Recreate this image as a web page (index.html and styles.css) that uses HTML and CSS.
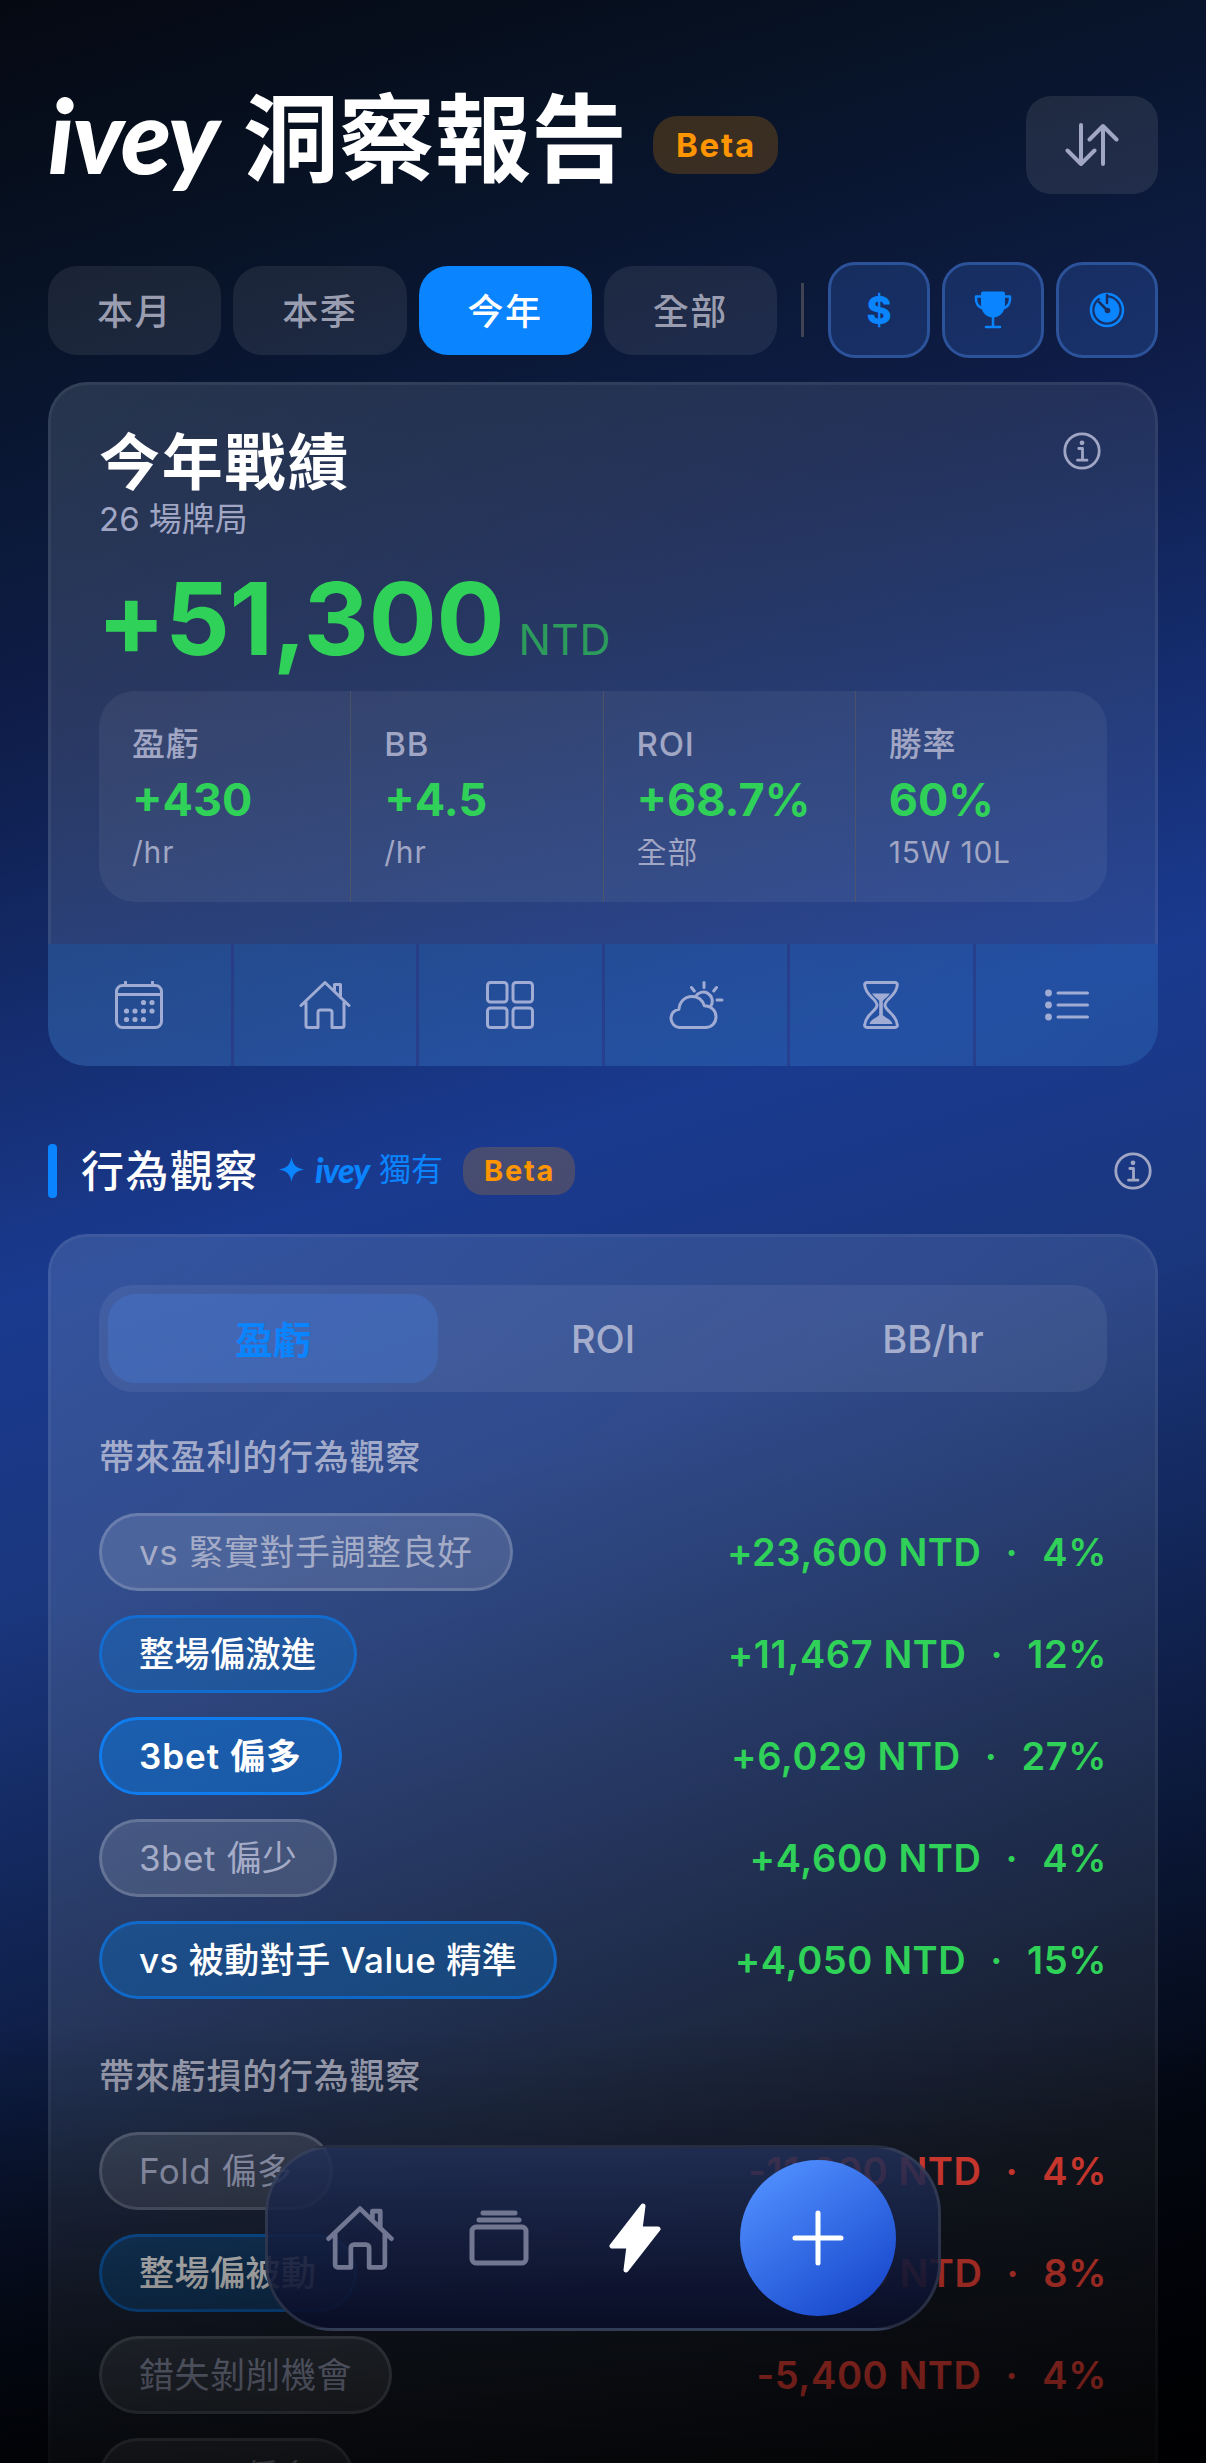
FILE: index.html
```html
<!DOCTYPE html>
<html lang="zh-Hant">
<head>
    <meta charset="UTF-8">
    <meta name="viewport" content="width=device-width, initial-scale=1.0">
    <title>ivey 洞察報告</title>
    <link rel="stylesheet" href="styles.css">
</head>
<body>
    <div class="screen">
        <header class="header">
            <h1 class="page-title"><span class="logo">ivey</span>洞察報告</h1>
            <span class="beta">Beta</span>
            <button class="sort-button">
                <svg width="54" height="44" viewBox="0 0 54 44"><path d="M16 2v39M2.500 27.500 16 41l13.500-13.500M38 41V3M24.500 16.500 38 3l13.500 13.500"/></svg>
            </button>
        </header>

        <div class="filters">
            <button class="tab">本月</button>
            <button class="tab">本季</button>
            <button class="tab active">今年</button>
            <button class="tab">全部</button>
            <span class="divider"></span>
            <button class="type-button dollar">$</button>
            <button class="type-button">
                <svg width="38" height="38" viewBox="0 0 38 38">
                    <path class="fill" d="M9 0.500h20a2 2 0 0 1 2 2V13c0 8-5 13.500-12 13.500S7 21 7 13V2.500a2 2 0 0 1 2-2z"/>
                    <path d="M7 5.500H2c-.5 6 1.500 10.500 7 12M31 5.500h5c.5 6-1.500 10.500-7 12M19 25v10M12 36h14"/>
                </svg>
            </button>
            <button class="type-button">
                <svg width="36" height="36" viewBox="0 0 36 36">
                    <circle cx="18" cy="18" r="16"/>
                    <circle class="fill" cx="18" cy="18" r="12.500"/>
                    <path class="fill" d="M8 5 17 2v8z"/>
                    <path class="needle" d="M18 3v8M10 10l8 8"/>
                    <circle class="hub" cx="18.500" cy="18.500" r="2.800"/>
                </svg>
            </button>
        </div>

        <section class="card summary">
            <div class="summary-body">
                <div class="summary-head">
                    <h2>今年戰績</h2>
                    <svg class="info" width="38" height="38" viewBox="0 0 38 38"><circle cx="19" cy="19" r="17.200"/><circle class="dot" cx="19" cy="10.800" r="2.400"/><path d="M15.800 16.500h3.700v11.500M14.500 28.200h9.500"/></svg>
                </div>
                <p class="games">26 場牌局</p>
                <p class="total">+51,300<span>NTD</span></p>
                <div class="stats">
                    <div class="stat">
                        <span class="stat-label">盈虧</span>
                        <span class="stat-value">+430</span>
                        <span class="stat-note">/hr</span>
                    </div>
                    <div class="stat">
                        <span class="stat-label">BB</span>
                        <span class="stat-value">+4.5</span>
                        <span class="stat-note">/hr</span>
                    </div>
                    <div class="stat">
                        <span class="stat-label">ROI</span>
                        <span class="stat-value">+68.7%</span>
                        <span class="stat-note">全部</span>
                    </div>
                    <div class="stat">
                        <span class="stat-label">勝率</span>
                        <span class="stat-value">60%</span>
                        <span class="stat-note">15W 10L</span>
                    </div>
                </div>
            </div>
            <div class="shortcuts">
                <button>
                    <svg width="48" height="48" viewBox="0 0 48 48">
                        <rect x="1.500" y="4.500" width="45" height="42" rx="6"/>
                        <path d="M2 13.500h44M10.500 1v3M37.500 1v3"/>
                        <g class="dots"><circle cx="28.500" cy="21.500" r="2.600"/><circle cx="37" cy="21.500" r="2.600"/><circle cx="11.500" cy="30" r="2.600"/><circle cx="20" cy="30" r="2.600"/><circle cx="28.500" cy="30" r="2.600"/><circle cx="37" cy="30" r="2.600"/><circle cx="11.500" cy="38.500" r="2.600"/><circle cx="20" cy="38.500" r="2.600"/><circle cx="28.500" cy="38.500" r="2.600"/></g>
                    </svg>
                </button>
                <button>
                    <svg width="52" height="48" viewBox="0 0 52 48"><path d="M2 24.500 26 1.500l24 23M7 21v23.500a2 2 0 0 0 2 2h10V31.500a2.500 2.500 0 0 1 2.500-2.500h9a2.500 2.500 0 0 1 2.500 2.500v15h10a2 2 0 0 0 2-2V21M35.500 9V3.500h6v13"/></svg>
                </button>
                <button>
                    <svg width="48" height="48" viewBox="0 0 48 48"><rect x="1.500" y="1.500" width="19.500" height="19.500" rx="3"/><rect x="27" y="1.500" width="19.500" height="19.500" rx="3"/><rect x="1.500" y="27" width="19.500" height="19.500" rx="3"/><rect x="27" y="27" width="19.500" height="19.500" rx="3"/></svg>
                </button>
                <button>
                    <svg width="56" height="48" viewBox="0 0 56 48"><path d="M11.500 46.500a9.200 9.200 0 0 1-.5-18.300C11.500 20.500 17 15.500 24 15.500c6 0 10.500 3.800 12.300 9.200 7 .3 11.700 4.800 11.700 11 0 6.300-4.500 10.800-10.500 10.800zM27.500 15.500a9 9 0 1 1 15.500 9.200M36 1.500v5M23.500 6.500l2.800 3.500M48.500 6.500 45.700 10M49 19h5"/></svg>
                </button>
                <button>
                    <svg width="36" height="48" viewBox="0 0 36 48">
                        <path d="M4 1.500h28c1.500 0 2.500 1 2.300 2.500-.8 11-12.300 14-12.300 20s11.500 9 12.300 20c.2 1.500-.8 2.500-2.300 2.500H4c-1.500 0-2.500-1-2.300-2.500C2.500 33 14 30 14 24S2.500 15 1.700 4C1.500 2.500 2.500 1.500 4 1.500z"/>
                        <path class="sand" d="M9 12.500h18c-2 3.500-5.500 5-7.200 7.500v14c2 3 8.200 3.500 9.700 9h-23c1.500-5.500 7.700-6 9.700-9V20C14.500 17.500 11 16 9 12.500z"/>
                    </svg>
                </button>
                <button>
                    <svg width="46" height="48" viewBox="0 0 46 48"><path d="M14 12h29.500M14 24h29.500M14 36h29.500"/><g class="dots"><circle cx="4.500" cy="12" r="3.400"/><circle cx="4.500" cy="24" r="3.400"/><circle cx="4.500" cy="36" r="3.400"/></g></svg>
                </button>
            </div>
        </section>

        <div class="section-head">
            <span class="marker"></span>
            <h3>行為觀察</h3>
            <div class="exclusive">
                <svg width="25" height="25" viewBox="0 0 25 25"><path d="M12.500 0c1.300 7.500 4 11 12.500 12.500C16.500 14 13.800 17.500 12.500 25 11.200 17.500 8.500 14 0 12.500 8.500 11 11.200 7.500 12.500 0z"/></svg>
                <span class="logo">ivey</span>
                <span>獨有</span>
            </div>
            <span class="beta small">Beta</span>
            <svg class="info" width="38" height="38" viewBox="0 0 38 38"><circle cx="19" cy="19" r="17.200"/><circle class="dot" cx="19" cy="10.800" r="2.400"/><path d="M15.800 16.500h3.700v11.500M14.500 28.200h9.500"/></svg>
        </div>

        <section class="card behavior">
            <div class="segment">
                <button class="active">盈虧</button>
                <button>ROI</button>
                <button>BB/hr</button>
            </div>

            <h4>帶來盈利的行為觀察</h4>
            <ul class="rows">
                <li><span class="tag">vs 緊實對手調整良好</span><span class="amount">+23,600 NTD<i>·</i>4%</span></li>
                <li><span class="tag blue">整場偏激進</span><span class="amount">+11,467 NTD<i>·</i>12%</span></li>
                <li><span class="tag blue strong">3bet 偏多</span><span class="amount">+6,029 NTD<i>·</i>27%</span></li>
                <li><span class="tag">3bet 偏少</span><span class="amount">+4,600 NTD<i>·</i>4%</span></li>
                <li><span class="tag blue">vs 被動對手 Value 精準</span><span class="amount">+4,050 NTD<i>·</i>15%</span></li>
            </ul>

            <h4 class="loss-title">帶來虧損的行為觀察</h4>
            <ul class="rows loss">
                <li><span class="tag">Fold 偏多</span><span class="amount">-11,200 NTD<i>·</i>4%</span></li>
                <li><span class="tag blue">整場偏被動</span><span class="amount">-8,200 NTD<i>·</i>8%</span></li>
                <li><span class="tag">錯失剝削機會</span><span class="amount">-5,400 NTD<i>·</i>4%</span></li>
                <li><span class="tag">Value 偏多</span></li>
            </ul>
        </section>

        <div class="bottom-fade"></div>

        <nav class="nav">
            <button>
                <svg width="68" height="64" viewBox="0 0 52 48"><path d="M2 24.500 26 1.500l24 23M7 21v23.500a2 2 0 0 0 2 2h10V31.500a2.500 2.500 0 0 1 2.500-2.500h9a2.500 2.500 0 0 1 2.500 2.500v15h10a2 2 0 0 0 2-2V21M35.500 9V3.500h6v13"/></svg>
            </button>
            <button class="sessions">
                <svg width="60" height="56" viewBox="0 0 60 56"><rect x="3" y="17" width="54" height="36" rx="4"/><path d="M14 3h32M10 10h40"/></svg>
            </button>
            <button class="insights">
                <svg class="bolt" width="52" height="70" viewBox="0 0 52 70"><path d="M34 3 3 43h17l-3 24 32-41H31z"/></svg>
            </button>
            <button class="add">
                <svg width="56" height="56" viewBox="0 0 56 56"><path d="M28 3v50M5 28h46"/></svg>
            </button>
        </nav>
    </div>
</body>
</html>
```
FILE: styles.css
```css
:root {
    --blue: #0a84ff;
    --green: #30d158;
    --red: #ff453a;
    --orange: #ff9500;
    --muted: #a0a6c4;
    --font: Inter, "Noto Sans CJK TC", sans-serif;
}

* {
    box-sizing: border-box;
}

body {
    margin: 0;
    font-family: var(--font);
    color: #fff;
    background: #000;
}

h1, h2, h3, h4, p, ul {
    margin: 0;
    padding: 0;
}

button {
    font-family: inherit;
    color: inherit;
    background: none;
    border: none;
    padding: 0;
    display: flex;
    align-items: center;
    justify-content: center;
}

svg {
    display: block;
    flex: none;
    fill: none;
    stroke: currentColor;
    stroke-width: 3;
    stroke-linecap: round;
    stroke-linejoin: round;
}

.screen {
    position: relative;
    height: 2463px;
    overflow: hidden;
    padding: 96px 48px 0;
    background: linear-gradient(163deg, #050912 0%, #071224 10%, #0f1e4a 26%, #1a3a8f 46%, #1a367d 57%, #10224f 70%, #030814 87%, #000105 100%);
}

/* Header */
.header {
    display: flex;
    align-items: center;
    height: 98px;
}

.page-title {
    display: flex;
    align-items: baseline;
    font-size: 96px;
    line-height: 98px;
    font-weight: 700;
    margin-top: -17px;
}

.logo {
    font-family: Lato, "Noto Sans", sans-serif;
    font-style: italic;
    font-weight: 900;
}

.page-title .logo {
    width: 195px;
    font-size: 103px;
    letter-spacing: -1.500px;
}

.beta {
    margin-left: 26px;
    width: 125px;
    height: 58px;
    line-height: 58px;
    border-radius: 24px;
    text-align: center;
    font-size: 33px;
    font-weight: 700;
    letter-spacing: 1.800px;
    text-indent: 1px;
    color: var(--orange);
    background: rgba(255, 149, 0, 0.2);
}

.beta.small {
    margin-left: 20px;
    width: 112px;
    height: 48px;
    line-height: 48px;
    border-radius: 20px;
    font-size: 29px;
}

.sort-button {
    margin-left: auto;
    width: 132px;
    height: 98px;
    border-radius: 25px;
    color: var(--muted);
    background: rgba(255, 255, 255, 0.09);
}

.sort-button svg {
    stroke-width: 4;
}

/* Filters */
.filters {
    display: flex;
    align-items: center;
    gap: 12px;
    height: 96px;
    margin-top: 68px;
}

.tab {
    flex: 1;
    height: 89px;
    padding-bottom: 2px;
    border-radius: 29px;
    font-size: 36px;
    font-weight: 500;
    letter-spacing: 1.500px;
    color: #999daf;
    background: rgba(255, 255, 255, 0.08);
}

.tab.active {
    color: #fff;
    background: var(--blue);
}

.divider {
    width: 3px;
    height: 54px;
    margin: 0 12px;
    background: #404452;
}

.type-button {
    width: 102px;
    height: 96px;
    border: 3px solid #2c529a;
    border-radius: 27px;
    color: var(--blue);
    background: rgba(50, 105, 200, 0.27);
}

.dollar {
    font-size: 38px;
    font-weight: 800;
}

.type-button svg {
    stroke-width: 2.500;
}

.type-button .fill {
    fill: currentColor;
    stroke: none;
}

.type-button .needle {
    stroke: #192c5d;
    stroke-width: 2.500;
}

.type-button .hub {
    fill: #192c5d;
    stroke: none;
}

/* Cards */
.card {
    border-radius: 39px;
    background: linear-gradient(135deg, rgba(215, 238, 255, 0.14), rgba(255, 255, 255, 0.06));
}

.info {
    color: var(--muted);
    stroke-width: 2.800;
}

.info .dot {
    fill: currentColor;
    stroke: none;
}

.summary {
    height: 684px;
    margin-top: 24px;
    overflow: hidden;
}

.summary-body {
    height: 562px;
    padding: 47px 48px 0;
    border: 3px solid rgba(255, 255, 255, 0.06);
    border-bottom: none;
    border-radius: 39px 39px 0 0;
}

.summary-head {
    display: flex;
    justify-content: space-between;
    padding-right: 6px;
}

.summary h2 {
    font-size: 61px;
    line-height: 62px;
    letter-spacing: 1.800px;
}

.games {
    font-size: 33px;
    line-height: 40px;
    margin-top: 5px;
    color: var(--muted);
}

.total {
    display: flex;
    align-items: baseline;
    font-size: 101px;
    line-height: 100px;
    font-weight: 700;
    letter-spacing: -0.300px;
    margin: 29px 0 0 -2px;
    color: var(--green);
}

.total span {
    margin-left: 14px;
    font-size: 43px;
    font-weight: 400;
    letter-spacing: 0.500px;
    opacity: 0.65;
}

.stats {
    display: flex;
    height: 211px;
    margin-top: 2px;
    border-radius: 36px;
    background: rgba(255, 255, 255, 0.06);
}

.stat {
    flex: 1;
    display: flex;
    flex-direction: column;
    padding: 32px 0 0 33px;
    color: var(--muted);
}

.stat + .stat {
    border-left: 1px solid rgba(95, 90, 90, 0.6);
}

.stat-label {
    font-size: 33px;
    line-height: 42px;
    font-weight: 500;
    letter-spacing: 0.800px;
}

.stat-value {
    font-size: 45px;
    line-height: 56px;
    margin-top: 7px;
    font-weight: 700;
    color: var(--green);
}

.stat-note {
    font-size: 30px;
    line-height: 40px;
    margin-top: 4px;
    letter-spacing: 0.800px;
}

.shortcuts {
    display: flex;
    height: 122px;
    background: rgba(22, 108, 205, 0.24);
}

.shortcuts button {
    flex: 1;
    color: #a0acd4;
}

.shortcuts button + button {
    border-left: 3px solid rgba(45, 45, 120, 0.45);
}

.dots, .sand {
    fill: currentColor;
    stroke: none;
}

/* Section heading */
.section-head {
    display: flex;
    align-items: center;
    height: 54px;
    margin-top: 78px;
    padding-right: 6px;
}

.section-head .info {
    margin-left: auto;
}

.marker {
    width: 9px;
    height: 54px;
    border-radius: 4px;
    background: var(--blue);
}

.section-head h3 {
    margin-left: 24px;
    font-size: 43px;
    line-height: 54px;
    font-weight: 500;
    letter-spacing: 1.500px;
}

.exclusive {
    display: flex;
    align-items: center;
    margin: -3px 0 0 20px;
    font-size: 32px;
    line-height: 40px;
    color: var(--blue);
}

.exclusive svg {
    fill: currentColor;
    stroke: none;
}

.exclusive .logo {
    margin: 0 10px 0 11px;
    font-size: 34px;
    letter-spacing: -1px;
}

/* Behavior list */
.behavior {
    height: 1300px;
    margin-top: 36px;
    padding: 48px 48px 0;
    background-clip: border-box;
    border: 3px solid rgba(255, 255, 255, 0.05);
    background-origin: border-box;
}

.segment {
    display: flex;
    height: 107px;
    padding: 9px;
    border-radius: 34px;
    background: rgba(255, 255, 255, 0.07);
}

.segment button {
    flex: 1;
    border-radius: 27px;
    font-size: 38px;
    font-weight: 500;
    color: #a6aecd;
}

.segment .active {
    padding-bottom: 3px;
    font-weight: 700;
    color: var(--blue);
    background: rgba(70, 130, 230, 0.3);
}

.behavior h4 {
    height: 54px;
    margin: 38px 0 29px;
    font-size: 35px;
    line-height: 54px;
    font-weight: 500;
    letter-spacing: 0.800px;
    color: #a3abcb;
}

.behavior .loss-title {
    margin: 50px 0 29px;
    color: #9ea1b3;
}

.rows {
    display: flex;
    flex-direction: column;
    gap: 24px;
    list-style: none;
}

.rows li {
    display: flex;
    align-items: center;
    justify-content: space-between;
    height: 78px;
}

.tag {
    height: 78px;
    line-height: 72px;
    padding: 0 37px;
    border: 3px solid rgba(200, 208, 225, 0.24);
    border-radius: 39px;
    background: rgba(255, 255, 255, 0.13);
    font-size: 35px;
    letter-spacing: 0.500px;
    color: #a5acc8;
}

.tag.blue {
    font-weight: 500;
    color: #fff;
    border-color: rgba(10, 120, 235, 0.65);
    background-color: rgba(10, 120, 220, 0.33);
}

.tag.strong {
    font-weight: 600;
    letter-spacing: 1px;
    border-color: #0f7df0;
    background-color: rgba(10, 120, 225, 0.5);
}

.amount {
    font-size: 38px;
    font-weight: 600;
    letter-spacing: 0.600px;
    color: var(--green);
}

.amount i {
    font-style: normal;
    margin: 0 24px;
}

.loss .amount {
    color: var(--red);
}

.bottom-fade {
    position: absolute;
    left: 0;
    right: 0;
    bottom: 0;
    height: 440px;
    background: linear-gradient(rgba(0, 0, 0, 0), rgba(0, 0, 0, 0.7));
}

/* Bottom navigation */
.nav {
    position: absolute;
    left: 265px;
    bottom: 132px;
    display: flex;
    align-items: center;
    width: 676px;
    height: 186px;
    padding: 0 42px 0 58px;
    justify-content: space-between;
    border: 3px solid rgba(75, 82, 98, 0.45);
    border-radius: 68px;
    background: linear-gradient(rgba(34, 48, 88, 0.85), rgba(9, 14, 40, 0.9));
    color: #727791;
}

.nav svg {
    stroke-width: 5;
}

.nav button:first-child svg {
    stroke-width: 3.600;
}

.sessions {
    margin-right: 5px;
}

.insights {
    margin-right: 4px;
}

.nav .bolt {
    color: #fff;
    fill: #fff;
}

.nav .add {
    width: 156px;
    height: 156px;
    border-radius: 50%;
    color: #fff;
    background: linear-gradient(145deg, #508fff 10%, #1848cc 90%);
}
```
